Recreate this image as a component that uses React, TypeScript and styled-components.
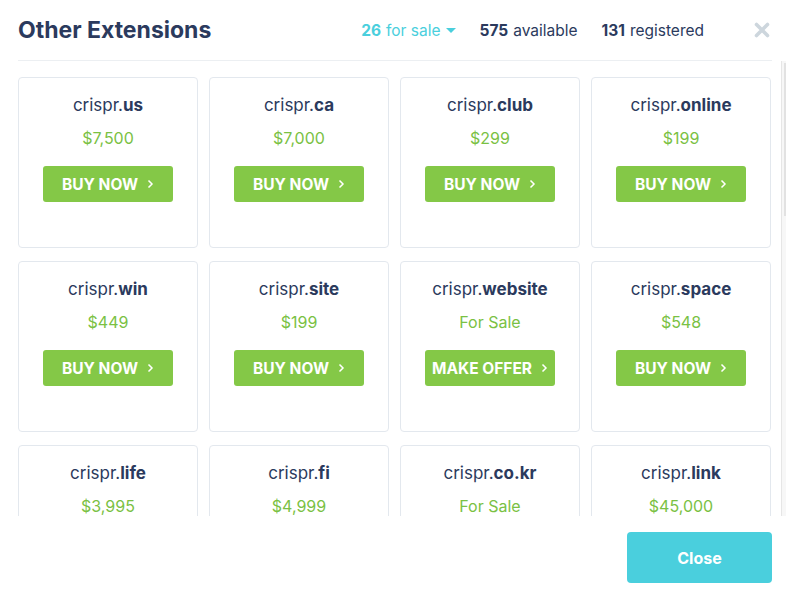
import React from "react";
import styled, { createGlobalStyle } from "styled-components";

const GlobalStyle = createGlobalStyle`
  html, body {
    margin: 0;
    padding: 0;
    background: #fff;
    overflow: hidden;
  }
  body {
    font-family: Inter, "Noto Sans", "Liberation Sans", sans-serif;
    -webkit-font-smoothing: antialiased;
  }
`;

const navy = "#2b3a5d";
const green = "#84c847";
const priceGreen = "#7ac143";
const teal = "#4acfdd";

type Ext = { tld: string; price: string; offer?: boolean };

const extensions: Ext[] = [
  { tld: "us", price: "$7,500" },
  { tld: "ca", price: "$7,000" },
  { tld: "club", price: "$299" },
  { tld: "online", price: "$199" },
  { tld: "win", price: "$449" },
  { tld: "site", price: "$199" },
  { tld: "website", price: "For Sale", offer: true },
  { tld: "space", price: "$548" },
  { tld: "life", price: "$3,995" },
  { tld: "fi", price: "$4,999" },
  { tld: "co.kr", price: "For Sale", offer: true },
  { tld: "link", price: "$45,000" },
  { tld: "store", price: "$299" },
  { tld: "tech", price: "$599" },
  { tld: "info", price: "$249" },
  { tld: "xyz", price: "$199" },
  { tld: "bio", price: "$1,299" },
  { tld: "health", price: "For Sale", offer: true },
  { tld: "co", price: "$2,499" },
  { tld: "io", price: "$3,500" },
  { tld: "net", price: "$1,999" },
  { tld: "org", price: "$2,999" },
  { tld: "de", price: "$899" },
  { tld: "me", price: "$499" },
  { tld: "shop", price: "$349" },
  { tld: "app", price: "$799" },
];

const Modal = styled.div`
  width: 786px;
  height: 592px;
  display: flex;
  flex-direction: column;
  padding-left: 18px;
  box-sizing: border-box;
  background: #fff;
`;

const Header = styled.div`
  height: 60px;
  margin-right: 14px;
  display: flex;
  align-items: center;
  border-bottom: 1px solid #eceff2;
  flex-shrink: 0;
`;

const Title = styled.h2`
  margin: 0 0 1px;
  font-size: 23px;
  font-weight: 700;
  color: ${navy};
  flex: 1;
`;

const Stats = styled.div`
  display: flex;
  align-items: center;
  gap: 24px;
  font-size: 15.5px;
  color: ${navy};
  margin-right: 49px;
`;

const Stat = styled.span<{ $accent?: boolean }>`
  color: ${(p) => (p.$accent ? teal : navy)};
  display: inline-flex;
  align-items: center;
  cursor: ${(p) => (p.$accent ? "pointer" : "default")};
  b {
    font-weight: 700;
    margin-right: 5px;
  }
`;

const Caret = styled.span`
  width: 0;
  height: 0;
  margin-left: 5px;
  border-left: 5px solid transparent;
  border-right: 5px solid transparent;
  border-top: 5px solid ${teal};
`;

const CloseX = styled.button`
  border: 0;
  background: none;
  padding: 0;
  width: 18px;
  height: 18px;
  margin-right: 1px;
  display: flex;
  align-items: center;
  justify-content: center;
  cursor: pointer;
`;

const Body = styled.div`
  flex: 1;
  min-height: 0;
  display: flex;
`;

const Scroller = styled.div`
  flex: 1;
  overflow: hidden;
  padding: 16px 0 20px;
`;

const Track = styled.div`
  width: 5px;
  background: #f7f7f7;
  border-left: 1px solid #e6e6e6;
  box-sizing: border-box;
  display: flex;
  justify-content: flex-end;
  padding-top: 2px;
`;

const Thumb = styled.div`
  width: 2px;
  height: 153px;
  background: #e2e2e2;
`;

const Grid = styled.div`
  display: grid;
  grid-template-columns: repeat(4, 180px);
  grid-auto-rows: 171px;
  column-gap: 11px;
  row-gap: 13px;
`;

const Card = styled.div`
  border: 1px solid #e3e8ee;
  border-radius: 4px;
  box-sizing: border-box;
  display: flex;
  flex-direction: column;
  align-items: center;
  padding-top: 16px;
`;

const Domain = styled.div`
  font-size: 17px;
  color: ${navy};
  line-height: 22px;
  b {
    font-weight: 700;
  }
`;

const Price = styled.div`
  margin-top: 11px;
  font-size: 16px;
  color: ${priceGreen};
  line-height: 22px;
`;

const BuyButton = styled.button`
  margin-top: 17px;
  width: 130px;
  height: 36px;
  border: 0;
  border-radius: 3px;
  background: ${green};
  color: #fff;
  font-family: inherit;
  font-size: 15.5px;
  font-weight: 700;
  text-transform: uppercase;
  display: flex;
  align-items: center;
  justify-content: center;
  gap: 9px;
  cursor: pointer;
`;

const Footer = styled.div`
  height: 76px;
  flex-shrink: 0;
  display: flex;
  align-items: flex-start;
  justify-content: flex-end;
  padding: 16px 14px 0 0;
  box-sizing: border-box;
`;

const CloseButton = styled.button`
  width: 145px;
  height: 51px;
  border: 0;
  border-radius: 4px;
  background: ${teal};
  color: #fff;
  font-family: inherit;
  font-size: 16px;
  font-weight: 700;
  cursor: pointer;
`;

const Chevron = () => (
  <svg width="7" height="10" viewBox="0 0 7 10">
    <path d="M1.5 1.5 L5 5 L1.5 8.5" fill="none" stroke="#fff" strokeWidth="1.5" />
  </svg>
);

const XIcon = () => (
  <svg width="16" height="16" viewBox="0 0 16 16">
    <path
      d="M2.5 2.5 L13.5 13.5 M13.5 2.5 L2.5 13.5"
      stroke="#cdd6dd"
      strokeWidth="3.6"
      strokeLinecap="round"
    />
  </svg>
);

export default function App() {
  return (
    <>
      <GlobalStyle />
      <Modal>
        <Header>
          <Title>Other Extensions</Title>
          <Stats>
            <Stat $accent>
              <b>26</b>for sale
              <Caret />
            </Stat>
            <Stat>
              <b>575</b>available
            </Stat>
            <Stat>
              <b>131</b>registered
            </Stat>
          </Stats>
          <CloseX aria-label="Close">
            <XIcon />
          </CloseX>
        </Header>
        <Body>
          <Scroller>
            <Grid>
              {extensions.map((e) => (
                <Card key={e.tld}>
                  <Domain>
                    crispr.<b>{e.tld}</b>
                  </Domain>
                  <Price>{e.price}</Price>
                  <BuyButton>
                    {e.offer ? "Make Offer" : "Buy Now"}
                    <Chevron />
                  </BuyButton>
                </Card>
              ))}
            </Grid>
          </Scroller>
          <Track>
            <Thumb />
          </Track>
        </Body>
        <Footer>
          <CloseButton>Close</CloseButton>
        </Footer>
      </Modal>
    </>
  );
}
